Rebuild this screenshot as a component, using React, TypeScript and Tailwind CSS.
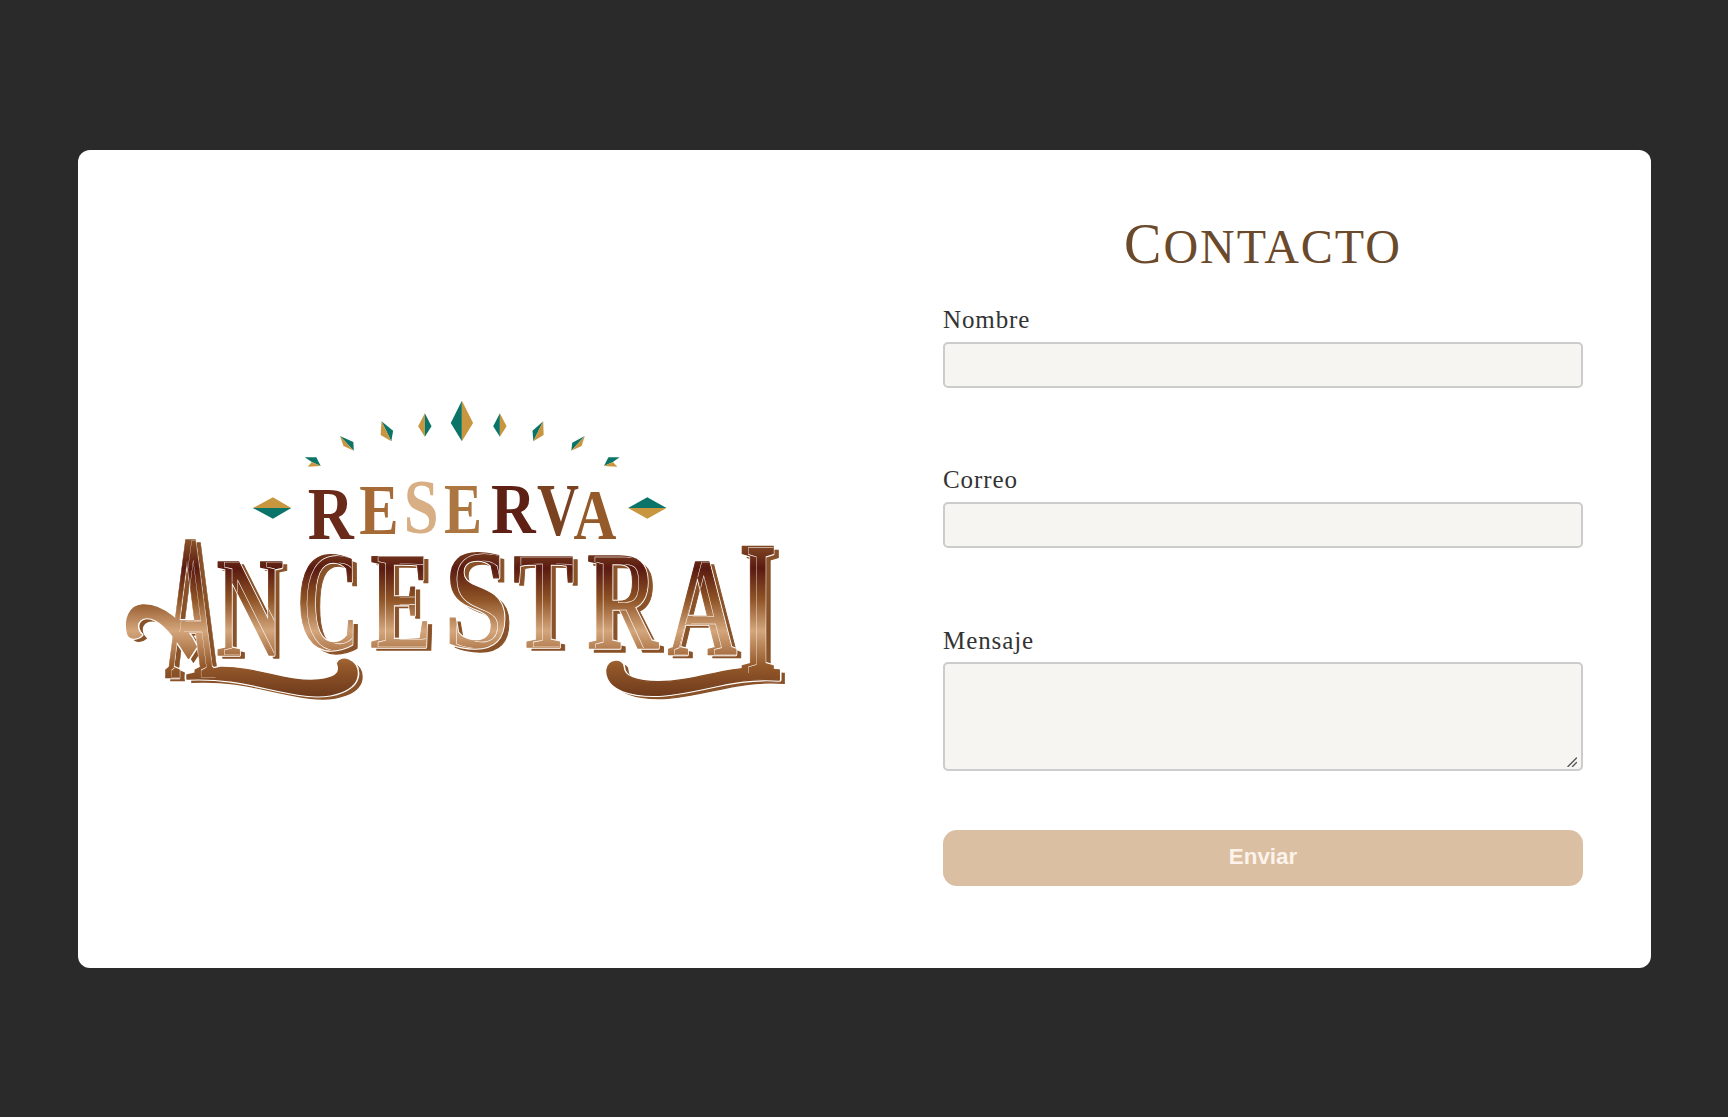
const big = [
  ["A", 125, 240, 480, 890],
  ["N", 240, 390, 545, 825],
  ["C", 420, 560, 530, 808],
  ["E", 585, 722, 530, 800],
  ["S", 750, 895, 525, 802],
  ["T", 905, 1040, 530, 800],
  ["R", 1070, 1228, 530, 805],
  ["A", 1250, 1405, 550, 825],
  ["I", 1410, 1495, 500, 880],
] as const;

const small = [
  ["R", 445, 548, 330, 476, "#6a2a1a"],
  ["E", 560, 648, 320, 463, "#a56a35"],
  ["S", 660, 738, 308, 460, "#d8ae84"],
  ["E", 750, 835, 315, 458, "#ac7640"],
  ["R", 855, 955, 315, 458, "#5e1f14"],
  ["V", 958, 1052, 322, 466, "#7a4220"],
  ["A", 1040, 1136, 335, 478, "#955a2a"],
] as const;

const diamonds: [number, number, number, number, string, string][] = [
  [790, 62, 25, 122, "#0b7468", "#c8963e"],
  [707, 100, 15, 70, "#c8963e", "#0b7468"],
  [875, 100, 15, 70, "#0b7468", "#c8963e"],
];

const swashes = [
  "M195 800C170 730 120 672 75 675C45 678 35 720 42 760C46 778 62 778 72 765C60 750 58 725 75 715C105 700 140 750 178 835Z",
  "M175 885L250 862C330 860 400 910 470 900C505 895 522 880 512 850C520 825 555 840 555 880C555 930 500 955 440 945C350 930 290 890 175 897Z",
  "M1500 870L1450 865C1380 860 1310 905 1230 905C1180 905 1150 890 1150 860C1150 840 1120 835 1115 870C1115 930 1170 950 1240 945C1330 935 1400 890 1500 900Z",
];

function Logo() {
  return (
    <svg viewBox="0 0 1567 1020" preserveAspectRatio="none" className="block w-[700px] h-[340px]" role="img" aria-label="Reserva Ancestral">
      <defs>
        <linearGradient id="metal" gradientUnits="userSpaceOnUse" x1="0" y1="480" x2="0" y2="950">
          <stop offset="0" stopColor="#8a5228" />
          <stop offset="0.18" stopColor="#5a1a10" />
          <stop offset="0.38" stopColor="#8f5426" />
          <stop offset="0.58" stopColor="#d4a67c" />
          <stop offset="0.8" stopColor="#95592a" />
          <stop offset="1" stopColor="#6e3a1c" />
        </linearGradient>
        <g id="anc-swash">
          {swashes.map((d, i) => (
            <path key={i} d={d} />
          ))}
        </g>
        <mask id="anc-mask" maskUnits="userSpaceOnUse" x="0" y="0" width="1567" height="1020">
          <use href="#anc-letters" fill="#ffffff" />
        </mask>
      </defs>

      {diamonds.map(([x, y, hw, h, l, r], i) => (
        <g key={i}>
          <polygon points={`${x},${y} ${x - hw},${y + h * 0.55} ${x},${y + h}`} fill={l} />
          <polygon points={`${x},${y} ${x + hw},${y + h * 0.55} ${x},${y + h}`} fill={r} />
        </g>
      ))}
      <polygon points="610,124 636,152 632,184" fill="#0b7468" />
      <polygon points="610,124 632,184 608,165" fill="#c8963e" />
      <polygon points="972,124 948,152 950,184" fill="#0b7468" />
      <polygon points="972,124 950,184 973,165" fill="#c8963e" />
      <polygon points="517,168 547,186 548,212" fill="#0b7468" />
      <polygon points="517,168 548,212 525,198" fill="#c8963e" />
      <polygon points="1065,168 1037,188 1035,212" fill="#0b7468" />
      <polygon points="1065,168 1035,212 1058,198" fill="#c8963e" />
      <polygon points="438,232 464,232 474,258 454,246" fill="#0b7468" />
      <polygon points="454,246 474,258 445,260" fill="#c8963e" />
      <polygon points="1143,232 1118,232 1108,258 1128,246" fill="#0b7468" />
      <polygon points="1128,246 1108,258 1138,260" fill="#c8963e" />

      <polygon points="322,384 367,352 408,384" fill="#c8963e" />
      <polygon points="322,384 367,416 408,384" fill="#0b7468" />
      <polygon points="1162,384 1205,352 1248,384" fill="#0b7468" />
      <polygon points="1162,384 1205,416 1248,384" fill="#c8963e" />

      {small.map(([c, x0, x1, top, bottom, color], i) => (
        <text key={i} x={x0} y={bottom} fontSize={(bottom - top) / 0.655} textLength={x1 - x0} lengthAdjust="spacingAndGlyphs" fontFamily="'Liberation Serif', serif" fontWeight={700} fill={color}>
          {c}
        </text>
      ))}

      <g fill="#8a5228" stroke="#8a5228" strokeWidth={4} transform="translate(11 10)">
        <use href="#anc-letters" />
        <use href="#anc-swash" />
      </g>
      <g fill="#ffffff" stroke="#ffffff" strokeWidth={11} strokeLinejoin="round">
        <use href="#anc-letters" />
        <use href="#anc-swash" />
      </g>
      <g fill="url(#metal)" stroke="url(#metal)" strokeWidth={4} strokeLinejoin="round">
        <g id="anc-letters" fontFamily="'Liberation Serif', serif" fontWeight={700}>
          {big.map(([c, x0, x1, top, bottom], i) => (
            <text key={i} x={x0} y={bottom} fontSize={(bottom - top) / 0.655} textLength={x1 - x0} lengthAdjust="spacingAndGlyphs">
              {c}
            </text>
          ))}
        </g>
        <use href="#anc-swash" />
      </g>
      <g mask="url(#anc-mask)">
        <use href="#anc-letters" transform="translate(14 1)" fill="none" stroke="#ffffff" strokeWidth={2} />
      </g>
    </svg>
  );
}

function Label({ children, htmlFor, className }: { children: string; htmlFor: string; className: string }) {
  return (
    <label htmlFor={htmlFor} className={`block h-[30px] text-[25px] leading-[30px] tracking-[0.9px] text-[#333333] ${className}`}>
      {children}
    </label>
  );
}

const fieldClass = "block w-full rounded-[5px] border-2 border-[#cccccc] bg-[#f6f5f1] outline-none";

export default function App() {
  return (
    <div className="min-h-screen bg-[#2a2a2a] pt-[150px] pl-[78px] font-['Liberation_Serif',serif]">
      <div className="w-[1573px] h-[818px] bg-white rounded-[12px] flex justify-between">
        <div className="w-[762px] flex items-center justify-center pb-[18px]">
          <Logo />
        </div>
        <form className="w-[640px] mr-[68px] pt-[66px]">
          <h2 className="h-[56px] mb-[33px] text-center leading-[56px] text-[#6b4a2b] text-[48px] tracking-[2px] whitespace-nowrap">
            <span className="text-[56px]">C</span>ONTACTO
          </h2>
          <Label htmlFor="nombre" className="mb-[7px]">Nombre</Label>
          <input id="nombre" className={`${fieldClass} h-[46px] mb-[77px]`} />
          <Label htmlFor="correo" className="mb-[7px]">Correo</Label>
          <input id="correo" className={`${fieldClass} h-[46px] mb-[78px]`} />
          <Label htmlFor="mensaje" className="mb-[6px]">Mensaje</Label>
          <div className="relative mb-[59px]">
            <textarea id="mensaje" className={`${fieldClass} h-[109px] resize-none`} />
            <svg className="absolute right-[6px] bottom-[4px] w-[10px] h-[10px]" viewBox="0 0 10 10" fill="none" stroke="#555555" strokeWidth="1.4" strokeLinecap="round">
              <path d="M1 9.5L9.5 1" />
              <path d="M5.5 9.5L9.5 5.5" />
            </svg>
          </div>
          <button type="button" className="block w-full h-[56px] pb-[2px] rounded-[14px] bg-[#dabfa3] text-[22.4px] font-bold text-[#fdf3ea] font-['Liberation_Sans',sans-serif]">
            Enviar
          </button>
        </form>
      </div>
    </div>
  );
}
